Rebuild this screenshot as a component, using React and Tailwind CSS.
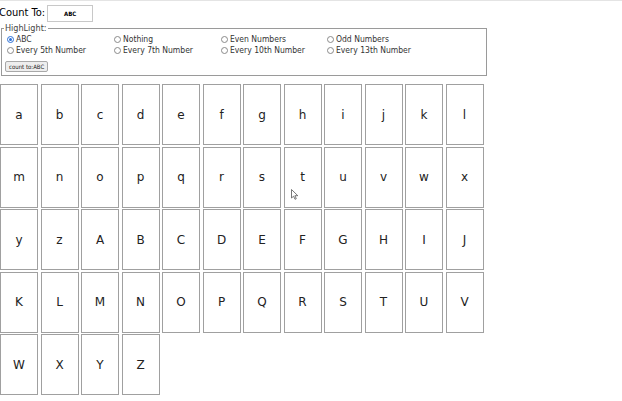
const lower = 'abcdefghijklmnopqrstuvwxyz'.split('')
const upper = 'ABCDEFGHIJKLMNOPQRSTUVWXYZ'.split('')
const letters = [...lower, ...upper]

const options = [
  'ABC', 'Nothing', 'Even Numbers', 'Odd Numbers',
  'Every 5th Number', 'Every 7th Number', 'Every 10th Number', 'Every 13th Number',
]

function Radio({ label, checked }) {
  return (
    <label className="flex items-center gap-[2px] h-[11px] leading-none">
      {checked ? (
        <span className="w-[7px] h-[7px] rounded-full border border-[#2b6fd6] flex items-center justify-center">
          <span className="w-[3px] h-[3px] rounded-full bg-[#2b6fd6]" />
        </span>
      ) : (
        <span className="w-[7px] h-[7px] rounded-full border border-[#8a8a8a] bg-white" />
      )}
      <span>{label}</span>
    </label>
  )
}

export default function App() {
  return (
    <div className="relative w-[622px] h-[401px] bg-white overflow-hidden border-t border-[#e4e4e4] text-black font-['DejaVu_Sans_Condensed','DejaVu_Sans',sans-serif]">
      {/* Count To */}
      <div className="flex items-center h-[21px] pt-[4px]">
        <span className="text-[11px] -ml-[1px] mr-[2px]">Count To:</span>
        <div className="w-[46px] h-[17px] border border-[#c8c8c8] flex items-center justify-center">
          <span className="text-[6px] font-bold">ABC</span>
        </div>
      </div>

      {/* HighLight */}
      <fieldset className="ml-[1px] mt-[2px] w-[486px] h-[52px] border border-[#9a9a9a] px-[5px] pt-[1px]">
        <legend className="text-[9px] text-[#444] px-[1px] ml-[-3px] leading-none">HighLight:</legend>
        <div className="grid grid-cols-[107px_107px_106px_106px] text-[8.5px] text-[#333]">
          {options.map((o, i) => <Radio key={o} label={o} checked={i === 0} />)}
        </div>
        <button className="mt-[5px] ml-[-2px] h-[11px] px-[3px] text-[6px] leading-none bg-[#eeeeee] border border-[#a8a8a8] rounded-[2px] text-[#222] align-top">
          count to:ABC
        </button>
      </fieldset>

      {/* letter cells */}
      <div className="mt-[8px] grid grid-cols-[repeat(12,38px)] gap-x-[2.5px] gap-y-[1.5px] font-['DejaVu_Sans',sans-serif]">
        {letters.map(l => (
          <div key={l} className="h-[61px] border-[1.5px] border-[#a0a0a0] flex items-center justify-center text-[12px] text-[#222]">
            {l}
          </div>
        ))}
      </div>

      {/* mouse pointer */}
      <svg className="absolute left-[291px] top-[188px]" width="8" height="11" viewBox="0 0 8 11">
        <path d="M0.5 0.5 L0.5 9 L2.6 7.2 L4 10.3 L5.3 9.7 L3.9 6.7 L6.8 6.7 Z" fill="#fff" stroke="#555" strokeWidth="0.8" />
      </svg>
    </div>
  )
}
